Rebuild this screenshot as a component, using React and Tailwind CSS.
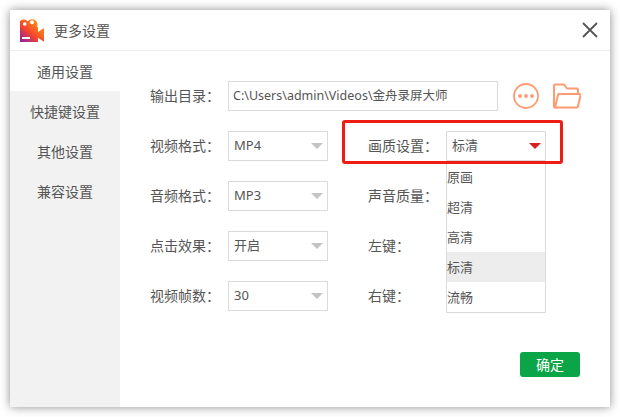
const FONT = "font-['Noto_Sans','Noto_Sans_CJK_SC',sans-serif]";

function Logo() {
  return (
    <svg width="24" height="24" viewBox="0 0 24 24" className="shrink-0">
      <defs>
        <linearGradient id="lg" gradientUnits="userSpaceOnUse" x1="1" y1="24" x2="20" y2="3">
          <stop offset="0" stopColor="#8a1fb0" />
          <stop offset="0.45" stopColor="#f2452e" />
          <stop offset="1" stopColor="#ff9a10" />
        </linearGradient>
      </defs>
      <path
        fill="url(#lg)"
        fillRule="evenodd"
        d="M0 10.500a5 5 0 0 1 7.800-7.200 5.500 5.500 0 0 1 9.700 3.200c0 1-.3 1.900-.7 2.500h1.200v5l5.500-3.700h.500v13l-.5.200-5.500-3.700V24H0Z
           M4.700 4.200a1.800 1.800 0 1 0 0 3.600 1.800 1.800 0 0 0 0-3.600Z
           M12 2.200a2 2 0 1 0 0 4 2 2 0 0 0 0-4Z"
      />
      <rect x="2" y="19" width="8" height="2" fill="#fff" />
    </svg>
  );
}

function Chevron({ color = "#c4c4c4" }) {
  return (
    <svg width="12" height="6" viewBox="0 0 12 6" className="shrink-0">
      <path d="M0 0h12L6 6Z" fill={color} />
    </svg>
  );
}

function Select({ value, active }) {
  return (
    <div className="w-[100px] h-[30px] border border-[#dadada] flex items-center justify-between pl-[5px] pr-[4px]">
      <span className="text-[13px] text-[#555]">{value}</span>
      <Chevron color={active ? "#d8201f" : "#c4c4c4"} />
    </div>
  );
}

function Label({ children, w }) {
  return <span className={`text-[14px] leading-[30px] text-[#555] whitespace-nowrap ${w}`}>{children}</span>;
}

const rows = [
  ["视频格式：", "MP4", "画质设置："],
  ["音频格式：", "MP3", "声音质量："],
  ["点击效果：", "开启", "左键："],
  ["视频帧数：", "30", "右键："],
];

const options = ["原画", "超清", "高清", "标清", "流畅"];

export default function App() {
  return (
    <div className={`w-[620px] h-[417px] p-[10px] bg-white ${FONT}`}>
      <div className="w-[600px] h-[397px] bg-white flex flex-col shadow-[0_0_9px_rgba(0,0,0,0.45)]">
        <div className="h-[41px] shrink-0 border-b border-[#ececec] flex items-center pl-[10px] pr-[12px]">
          <Logo />
          <span className="ml-[10px] text-[14px] text-[#555]">更多设置</span>
          <svg width="16" height="16" viewBox="0 0 16 16" className="ml-auto">
            <path d="M1 1l14 14M15 1L1 15" stroke="#555" strokeWidth="1.800" fill="none" />
          </svg>
        </div>
        <div className="flex flex-1 min-h-0">
          <div className="w-[110px] bg-[#f2f2f2] flex flex-col">
            {["通用设置", "快捷键设置", "其他设置", "兼容设置"].map((t, i) => (
              <div key={t} className={`h-[40px] flex items-center justify-center text-[14px] text-[#555] ${i === 0 ? "bg-white" : ""}`}>
                {t}
              </div>
            ))}
          </div>
          <div className="flex-1 relative pt-[30px] pl-[30px] flex flex-col gap-[20px]">
            <div className="flex items-center h-[30px]">
              <Label w="w-[78px]">输出目录：</Label>
              <div className="w-[270px] h-[30px] border border-[#dadada] flex items-center pl-[4px] text-[12.5px] text-[#555] whitespace-nowrap">
                C:\Users\admin\Videos\金舟录屏大师
              </div>
              <svg width="26" height="26" viewBox="0 0 26 26" className="ml-[15px]">
                <circle cx="13" cy="13" r="12" fill="none" stroke="#ff9a73" strokeWidth="1.800" />
                <circle cx="7" cy="13" r="1.900" fill="#ff9a73" />
                <circle cx="13" cy="13" r="1.900" fill="#ff9a73" />
                <circle cx="19" cy="13" r="1.900" fill="#ff9a73" />
              </svg>
              <svg width="28" height="26" viewBox="0 0 28 26" className="ml-[14px]">
                <path d="M4 24.500H2a1 1 0 0 1-1-1V2.500a1 1 0 0 1 1-1h9l3 4h10a1 1 0 0 1 1 1v4" fill="none" stroke="#ff9a73" strokeWidth="2" strokeLinejoin="round" />
                <path d="M6 11h20.500a1 1 0 0 1 1 1.200l-2.500 11.300a1 1 0 0 1-1 1H2L5 12a1 1 0 0 1 1-1Z" fill="none" stroke="#ff9a73" strokeWidth="2" strokeLinejoin="round" />
              </svg>
            </div>
            {rows.map(([a, v, b], i) => (
              <div key={a} className="flex items-center h-[30px]">
                <Label w="w-[78px]">{a}</Label>
                <Select value={v} />
                <span className="w-[40px]" />
                <Label w="w-[78px]">{b}</Label>
                {i === 0 && <Select value="标清" active />}
              </div>
            ))}
            <div className="absolute left-[326px] top-[110px] w-[100px] h-[152px] bg-white border border-t-0 border-[#dadada] pt-[1px] flex flex-col">
              {options.map((o, i) => (
                <div key={o} className={`h-[30px] shrink-0 pt-[2px] flex items-center text-[13px] text-[#555] ${i === 3 ? "bg-[#ededed]" : ""}`}>
                  {o}
                </div>
              ))}
            </div>
            <div className="absolute left-[222px] top-[69px] w-[221px] h-[44px] border-[3px] border-[#ee1c14] rounded-[3px]" />
            <button className="absolute left-[400px] top-[301px] w-[60px] h-[25px] bg-[#0ba548] rounded-[3px] text-white text-[14px] flex items-center justify-center">
              确定
            </button>
          </div>
        </div>
      </div>
    </div>
  );
}
